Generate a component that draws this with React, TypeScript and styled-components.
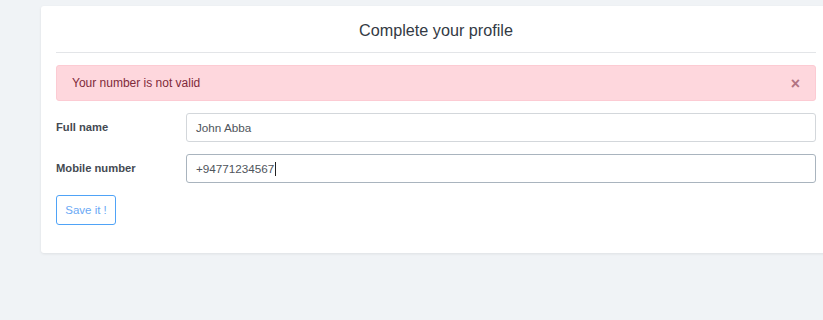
import React from "react";
import styled, { createGlobalStyle } from "styled-components";

const Global = createGlobalStyle`
  html, body { margin: 0; padding: 0; background: #f0f3f6; overflow: hidden; }
  body { font-family: "Liberation Sans", Arial, sans-serif; }
  * { box-sizing: border-box; }
`;

const Page = styled.div`
  padding: 6px 0 0 41px;
  width: 823px;
  height: 320px;
  overflow: hidden;
`;

const Card = styled.div`
  width: 790px;
  background: #fff;
  border-radius: 3px;
  box-shadow: 0 1px 3px rgba(0, 0, 0, 0.08);
  padding: 0 15px 28px;
`;

const Header = styled.div`
  height: 47px;
  border-bottom: 1px solid #e3e5e8;
  display: flex;
  align-items: center;
  justify-content: center;
  padding-top: 2px;
`;

const Title = styled.h1`
  margin: 0;
  font-size: 16.2px;
  font-weight: 400;
  color: #333a44;
`;

const Alert = styled.div`
  margin-top: 12px;
  height: 36px;
  background: #fed7dd;
  border: 1px solid #fccbd3;
  border-radius: 3px;
  display: flex;
  align-items: center;
  justify-content: space-between;
  padding: 0 15px 0 15px;
  color: #7e2a3a;
  font-size: 12px;
`;

const Close = styled.span`
  color: #b27382;
  font-size: 16px;
  font-weight: 700;
  line-height: 1;
  margin-top: 2px;
`;

const Row = styled.div<{ $top: number }>`
  display: grid;
  grid-template-columns: 130px 1fr;
  align-items: center;
  margin-top: ${(p) => p.$top}px;
`;

const Label = styled.label`
  font-size: 11.2px;
  font-weight: 700;
  color: #444a52;
  margin-top: -1px;
`;

const Input = styled.div<{ $focus?: boolean }>`
  height: 29px;
  border: 1px solid ${(p) => (p.$focus ? "#a9b4be" : "#d3d7db")};
  border-radius: 3px;
  display: flex;
  align-items: center;
  padding: 0 9px;
  font-size: 11.7px;
  color: #4f555c;
`;

const Caret = styled.span`
  display: inline-block;
  width: 1px;
  height: 14px;
  background: #222;
  margin-left: 1px;
`;

const Button = styled.button`
  margin-top: 12px;
  height: 30px;
  width: 60px;
  border: 1px solid #4fa3f7;
  border-radius: 3px;
  background: #fff;
  color: #6aa9f5;
  font-family: "Liberation Sans", Arial, sans-serif;
  font-size: 11.5px;
  padding: 0;
`;

export default function App() {
  return (
    <>
      <Global />
      <Page>
        <Card>
          <Header>
            <Title>Complete your profile</Title>
          </Header>
          <Alert>
            <span>Your number is not valid</span>
            <Close>×</Close>
          </Alert>
          <Row $top={12}>
            <Label>Full name</Label>
            <Input>John Abba</Input>
          </Row>
          <Row $top={12}>
            <Label>Mobile number</Label>
            <Input $focus>
              +94771234567
              <Caret />
            </Input>
          </Row>
          <Button>Save it !</Button>
        </Card>
      </Page>
    </>
  );
}
